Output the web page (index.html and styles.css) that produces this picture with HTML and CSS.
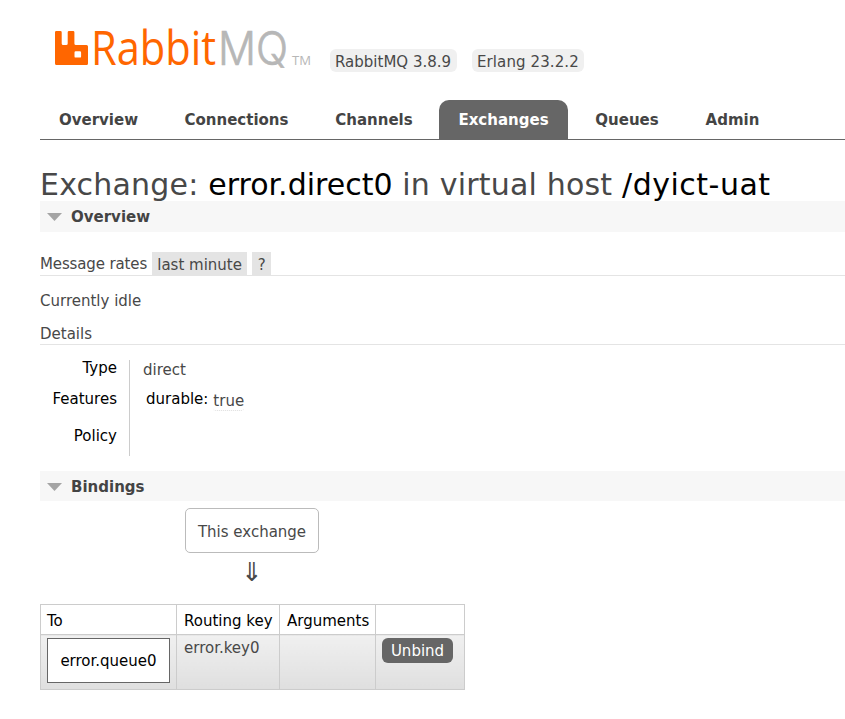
FILE: index.html
```html
<!DOCTYPE html>
<html lang="en">
<head>
<meta charset="utf-8">
<title>RabbitMQ Management</title>
<link rel="stylesheet" href="styles.css">
</head>
<body>
<header>
  <svg class="logo" width="260" height="64" viewBox="0 0 260 64" role="img" aria-label="RabbitMQ">
    <path class="mark" fill-rule="evenodd" d="M1.300 7h4.100q1.300 0 1.300 1.300V19.500q0 1.500 1.500 1.500h3q1.500 0 1.500-1.500V8.300q0-1.300 1.300-1.300h4.100q1.300 0 1.300 1.300V19.500q0 1.500 1.500 1.500h10.600q1.500 0 1.500 1.500v17q0 1.500-1.500 1.500h-30q-1.500 0-1.500-1.500V8.300q0-1.300 1.300-1.300zM20.700 27.200q-1.200 0-1.200 1.200v4q0 1.200 1.200 1.200h4.200q1.200 0 1.200-1.200v-4q0-1.200-1.200-1.200z"/>
    <text class="rabbit" x="36" y="41" textLength="125" lengthAdjust="spacingAndGlyphs">Rabbit</text>
    <text class="mq" x="163" y="41" textLength="70" lengthAdjust="spacingAndGlyphs">MQ</text>
    <text class="tm" x="237" y="41" textLength="19" lengthAdjust="spacingAndGlyphs">TM</text>
  </svg>
  <span class="version v1">RabbitMQ 3.8.9</span>
  <span class="version v2">Erlang 23.2.2</span>
</header>
<nav>
  <a class="overview">Overview</a>
  <a class="connections">Connections</a>
  <a class="channels">Channels</a>
  <a class="exchanges">Exchanges</a>
  <a class="queues">Queues</a>
  <a class="admin">Admin</a>
</nav>
<main>
  <h1>Exchange: <b>error.direct0</b> in virtual host <b class="vhost">/dyict-uat</b></h1>
  <h2><svg width="15" height="8" viewBox="0 0 15 8"><path d="M0 0h15L7.500 8z"/></svg>Overview</h2>
  <h3 class="rates">Message rates <span class="range">last minute</span><span class="help">?</span></h3>
  <p>Currently idle</p>
  <h3 class="details">Details</h3>
  <dl>
    <dt class="type">Type</dt><dd>direct</dd>
    <dt>Features</dt><dd class="features"><span>durable:</span><abbr>true</abbr></dd>
    <dt class="policy">Policy</dt><dd></dd>
  </dl>
  <h2 class="bindings"><svg width="15" height="8" viewBox="0 0 15 8"><path d="M0 0h15L7.500 8z"/></svg>Bindings</h2>
  <section class="flow">
    <div class="exchange">This exchange</div>
    <div class="arrow">⇓</div>
    <table>
      <colgroup><col class="c1"><col class="c2"><col class="c3"><col class="c4"></colgroup>
      <thead><tr><th>To</th><th>Routing key</th><th>Arguments</th><th></th></tr></thead>
      <tbody><tr><td><a class="queue">error.queue0</a></td><td class="key">error.key0</td><td></td><td><button>Unbind</button></td></tr></tbody>
    </table>
  </section>
</main>
</body>
</html>
```
FILE: styles.css
```css
* { box-sizing: border-box; }
body { margin: 0; padding-left: 40px; background: #fff; color: #484848; font: 15px/18px "DejaVu Sans", sans-serif; overflow: hidden; height: 719px; }
header { display: flex; height: 100px; padding: 24px 0 0 15px; }
.logo { flex: none; overflow: visible; }
.mark, .rabbit { fill: #f60; }
.rabbit { font: 47.500px "Open Sans", sans-serif; }
.mq { fill: #b7b7b7; stroke: #b7b7b7; stroke-width: 0.700px; font: 300 46.500px Inter, sans-serif; }
.tm { fill: #b7b7b7; font: 13px "Open Sans", sans-serif; }
.version { height: 23px; margin-top: 25px; padding: 4px 0 0 5px; border-radius: 6px; background: #f0f0f0; white-space: nowrap; }
.v1 { width: 127px; margin-left: 15px; }
.v2 { width: 112px; margin-left: 15px; letter-spacing: 0.100px; }
nav { display: flex; gap: 8px; height: 40px; border-bottom: 1px solid #666; font-weight: bold; color: #444; }
nav a { flex: none; height: 39px; padding-top: 11px; text-align: center; border-radius: 10px 10px 0 0; }
.overview { width: 117px; }
.connections { width: 143px; }
.channels { width: 116px; }
.exchanges { width: 129px; margin-left: -1px; background: #666; color: #fff; }
.queues { width: 102px; }
.admin { width: 93px; }
h1, h2, h3, p, dl, dd { margin: 0; }
h1 { height: 61px; padding-top: 27px; font-size: 30px; line-height: 35px; letter-spacing: 0.200px; font-weight: normal; white-space: nowrap; position: relative; }
h1 b { font-weight: normal; color: #000; letter-spacing: 0; }
h1 .vhost { letter-spacing: 0.500px; }
h2 { display: flex; align-items: center; gap: 9px; height: 31px; padding-left: 7px; background: #f7f7f7; font-size: 15px; line-height: 18px; color: #444; }
h2 path { fill: #a5a5a5; }
h2.bindings { height: 30px; margin-top: 15px; padding-top: 1px; }
h3 { border-bottom: 1px solid #e4e4e4; font-size: 15px; font-weight: normal; }
.rates { display: flex; height: 44px; padding-top: 20px; line-height: 24px; letter-spacing: -0.130px; white-space: nowrap; }
.range, .help { height: 23px; line-height: 26px; background: #e4e4e4; text-align: center; letter-spacing: 0; }
.range { width: 95px; margin-left: 5px; }
.help { width: 19px; margin-left: 5px; }
p { padding-top: 16px; height: 49px; }
.details { height: 20px; }
dl { display: grid; grid-template-columns: 90px 1fr; grid-template-rows: 30px 31px 35px; margin-top: 15px; }
dt { border-right: 1px solid #ccc; padding-right: 12px; text-align: right; color: #000; }
dt.type { line-height: 16px; }
dt.policy { padding-top: 6px; }
dd { padding: 1px 0 0 13px; }
.features { display: flex; padding: 0 0 0 16px; color: #000; }
abbr { height: 19px; margin: 2px 0 0 5px; border-bottom: 1px dotted #ddd; border-radius: 3px; color: #484848; }
.exchange { width: 134px; height: 45px; margin: 7px 0 0 145px; border: 1px solid #bbb; border-radius: 5px; text-align: center; line-height: 46px; }
.arrow { width: 424px; height: 51px; padding-top: 5px; text-align: center; font-size: 26px; line-height: 28px; }
table { width: 425px; table-layout: fixed; border-collapse: collapse; color: #000; }
.c1 { width: 136px; }
.c2 { width: 103px; }
.c3 { width: 96px; }
.c4 { width: 89px; }
th, td { border: 1px solid #ccc; text-align: left; vertical-align: top; font-weight: normal; white-space: nowrap; }
th { height: 30px; padding: 7px 0 0 6px; }
td { height: 55px; padding: 3px 0 0 6px; background: linear-gradient(#f0f0f0, #dfdfdf); color: #484848; }
td + td { padding-left: 7px; }
th + th { padding-left: 7px; }
td.key { padding-top: 4px; }
td:last-child { padding-left: 6px; }
.queue { display: block; width: 123px; height: 45px; border: 1px solid #666; background: #fff; color: #000; line-height: 44px; text-align: center; }
button { display: block; width: 71px; height: 25px; padding: 0; border: 0; border-radius: 6px; background: #666; color: #fff; font: 15px/26px "DejaVu Sans", sans-serif; }
```
